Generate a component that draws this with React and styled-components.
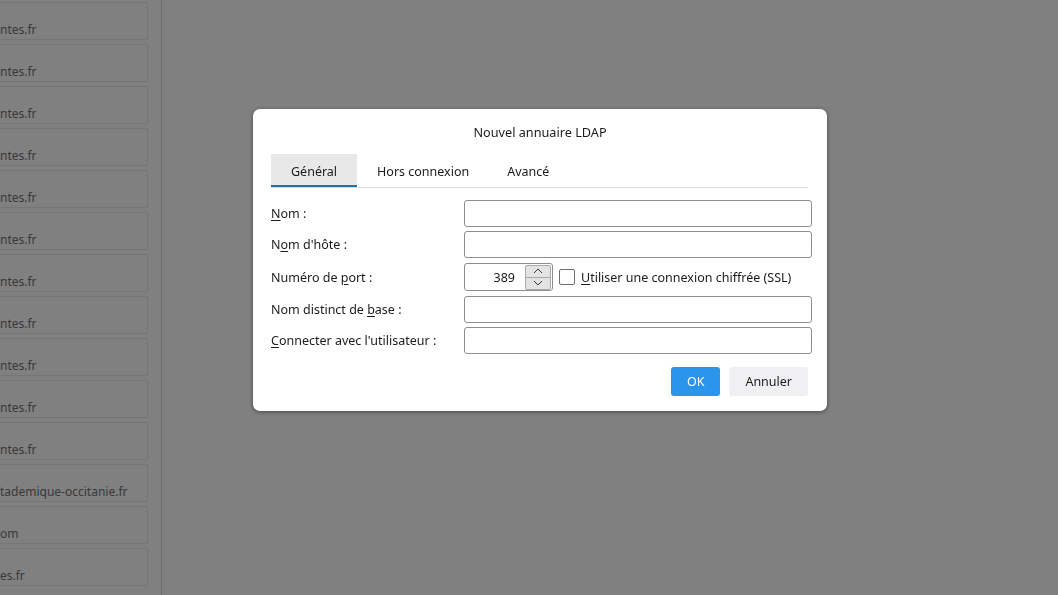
import React from "react";
import styled, { createGlobalStyle } from "styled-components";

const Global = createGlobalStyle`
  html, body { margin: 0; padding: 0; }
  body {
    width: 1058px;
    height: 595px;
    overflow: hidden;
    font-family: "Noto Sans", "Open Sans", sans-serif;
    background: #ffffff;
  }
`;

const Page = styled.div`
  display: flex;
  width: 1058px;
  height: 595px;
  background: #ffffff;
`;

const Sidebar = styled.aside`
  width: 162px;
  border-right: 1px solid #dcdcdc;
  overflow: hidden;
  padding-top: 2px;
  box-sizing: border-box;
`;

const Card = styled.div`
  margin-left: -8px;
  width: 156px;
  height: 38px;
  margin-bottom: 4px;
  border: 1px solid #ececec;
  border-left: none;
  box-sizing: border-box;
  display: flex;
  align-items: flex-end;
  padding: 0 0 1px 8px;
  font-size: 12px;
  color: #737373;
  white-space: nowrap;
`;

const Overlay = styled.div`
  position: fixed;
  inset: 0;
  background: rgba(0, 0, 0, 0.498);
  padding: 109px 0 0 253px;
`;

const Dialog = styled.div`
  width: 574px;
  background: #ffffff;
  border-radius: 7px;
  box-shadow: 0 1px 4px rgba(0, 0, 0, 0.45);
  padding: 0 15px 15px 18px;
  box-sizing: border-box;
  color: #1b1b1b;
  font-size: 12.5px;
`;

const Title = styled.div`
  height: 45px;
  display: flex;
  align-items: center;
  justify-content: center;
  font-size: 12.7px;
  margin-right: 3px;
`;

const Tabs = styled.div`
  display: flex;
  margin-right: 4px;
  border-bottom: 1px solid #dcdcdc;
`;

const Tab = styled.div`
  height: 33px;
  padding: 0 ${p => p.$pad}px;
  display: flex;
  align-items: center;
  box-sizing: border-box;
  background: ${p => (p.$active ? "#e8e8e8" : "transparent")};
  border-bottom: 2px solid ${p => (p.$active ? "#1f6fb2" : "transparent")};
  padding-top: 3px;
`;

const Form = styled.div`
  display: grid;
  grid-template-columns: 193px 1fr;
  grid-template-rows: 27px 27px 30px 27px 27px;
  row-gap: 4px;
  margin-top: 12px;
  align-items: center;
`;

const Label = styled.label`
  white-space: nowrap;
`;

const Key = styled.span`
  text-decoration: underline;
  text-underline-offset: 2px;
`;

const Input = styled.div`
  height: 27px;
  border: 1px solid #8e8e8e;
  border-radius: 3px;
  box-sizing: border-box;
  background: #fff;
`;

const PortRow = styled.div`
  display: flex;
  align-items: center;
  gap: 6px;
`;

const PortBox = styled.div`
  width: 89px;
  height: 28px;
  border: 1px solid #8e8e8e;
  border-radius: 3px;
  box-sizing: border-box;
  display: flex;
  align-items: center;
  padding: 0 1px 0 0;
`;

const PortValue = styled.span`
  flex: 1;
  text-align: right;
  padding-right: 10px;
`;

const Spinner = styled.div`
  width: 26px;
  height: 25px;
  display: flex;
  flex-direction: column;
  border: 1px solid #a9a9a9;
  border-radius: 2px;
  box-sizing: border-box;
  background: #e3e3e3;
`;

const SpinHalf = styled.div`
  flex: 1;
  display: flex;
  align-items: center;
  justify-content: center;
  border-top: ${p => (p.$down ? "1px solid #a9a9a9" : "none")};
`;

const Checkbox = styled.span`
  width: 16px;
  height: 16px;
  border: 1.5px solid #6e6e6e;
  border-radius: 2px;
  box-sizing: border-box;
  background: #fff;
`;

const Footer = styled.div`
  display: flex;
  justify-content: flex-end;
  gap: 9px;
  margin-top: 13px;
  margin-right: 4px;
`;

const Button = styled.button`
  height: 29px;
  padding: 0 16px;
  min-width: ${p => (p.$primary ? "49px" : "auto")};
  border: none;
  border-radius: 3px;
  font-family: inherit;
  font-size: 12.5px;
  background: ${p => (p.$primary ? "#2a95ea" : "#f0f0f3")};
  color: ${p => (p.$primary ? "#ffffff" : "#1b1b1b")};
`;

const Chevron = ({ up }) => (
  <svg width="10" height="6" viewBox="0 0 10 6">
    <path
      d={up ? "M1 5 L5 1 L9 5" : "M1 1 L5 5 L9 1"}
      fill="none"
      stroke="#3a3a3a"
      strokeWidth="1"
    />
  </svg>
);

const mails = [
  "ntes.fr", "ntes.fr", "ntes.fr", "ntes.fr", "ntes.fr", "ntes.fr",
  "ntes.fr", "ntes.fr", "ntes.fr", "ntes.fr", "ntes.fr",
  "tademique-occitanie.fr", "om", "es.fr",
];

export default function App() {
  return (
    <>
      <Global />
      <Page>
        <Sidebar>
          {mails.map((m, i) => (
            <Card key={i}>{m}</Card>
          ))}
        </Sidebar>
      </Page>
      <Overlay>
        <Dialog>
          <Title>Nouvel annuaire LDAP</Title>
          <Tabs>
            <Tab $active $pad={20}>Général</Tab>
            <Tab $pad={20}>Hors connexion</Tab>
            <Tab $pad={18}>Avancé</Tab>
          </Tabs>
          <Form>
            <Label><Key>N</Key>om :</Label>
            <Input />
            <Label>N<Key>o</Key>m d'hôte :</Label>
            <Input />
            <Label>Numéro de <Key>p</Key>ort :</Label>
            <PortRow>
              <PortBox>
                <PortValue>389</PortValue>
                <Spinner>
                  <SpinHalf><Chevron up /></SpinHalf>
                  <SpinHalf $down><Chevron /></SpinHalf>
                </Spinner>
              </PortBox>
              <Checkbox />
              <Label><Key>U</Key>tiliser une connexion chiffrée (SSL)</Label>
            </PortRow>
            <Label>Nom distinct de <Key>b</Key>ase :</Label>
            <Input />
            <Label><Key>C</Key>onnecter avec l'utilisateur :</Label>
            <Input />
          </Form>
          <Footer>
            <Button $primary>OK</Button>
            <Button>Annuler</Button>
          </Footer>
        </Dialog>
      </Overlay>
    </>
  );
}
